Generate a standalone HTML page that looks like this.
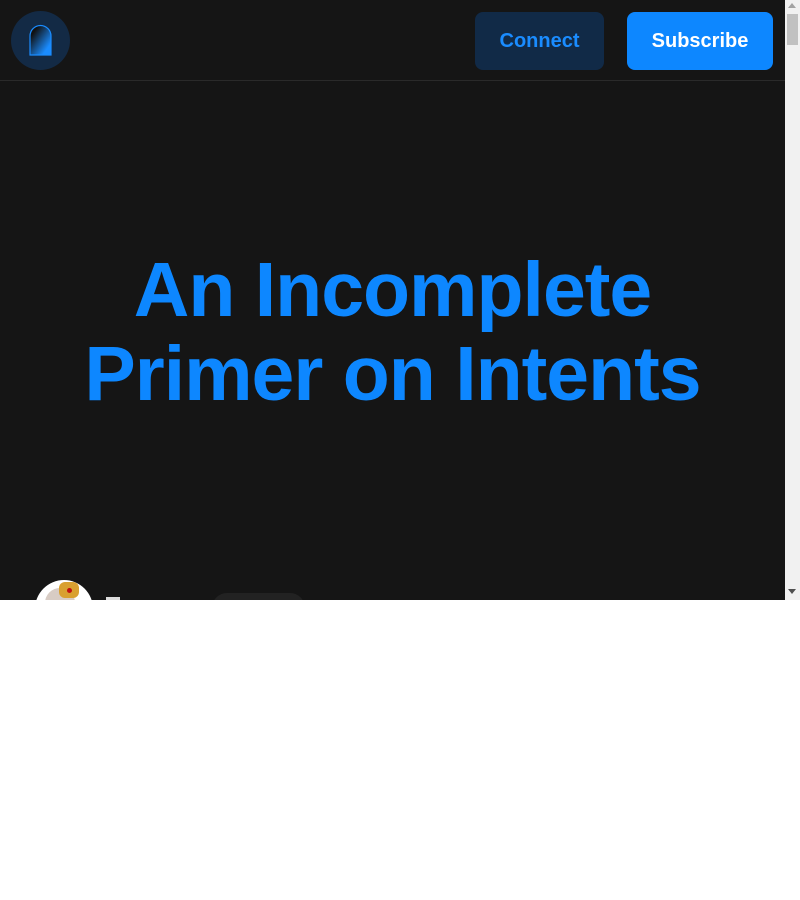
<!DOCTYPE html>
<html><head><style>
html,body{margin:0;padding:0;background:#fff;width:800px;height:900px;overflow:hidden;font-family:"Liberation Sans",sans-serif}
.main{position:absolute;left:0;top:0;width:785px;height:600px;background:#151515;overflow:hidden}
.hdr{position:absolute;left:0;top:0;width:785px;height:80px;border-bottom:1px solid #2a2a2a}
.logo{position:absolute;left:11px;top:11px;width:59px;height:59px;border-radius:50%;background:#132a45}
.btn{position:absolute;top:12px;height:58px;border-radius:8px;font-size:20px;line-height:58px;text-align:center;font-weight:bold}
.c{left:475px;width:129px;background:#112a47;color:#1a8cff}
.s{left:627px;width:146px;background:#0d87ff;color:#fff}
h1{position:absolute;left:0;top:248px;width:785px;margin:0;text-align:center;color:#0d87ff;font-size:77px;line-height:84px;font-weight:bold;letter-spacing:-1px}
.av{position:absolute;left:35px;top:580px;width:58px;height:58px;border-radius:50%;background:#fff;overflow:hidden}
.pill{position:absolute;left:212px;top:593px;width:93px;height:30px;border-radius:15px;background:#222}
.sb{position:absolute;left:785px;top:0;width:15px;height:600px;background:#f1f1f1}
.th{position:absolute;left:787px;top:14px;width:11px;height:31px;background:#c1c1c1}
</style></head><body>
<div class="main">
<div class="hdr">
<div class="logo"><svg width="59" height="59" viewBox="0 0 59 59"><defs><linearGradient id="g" x1="0" y1="0" x2="1" y2="1"><stop offset="0.2" stop-color="#111"/><stop offset="0.8" stop-color="#1a8cff"/></linearGradient></defs><path d="M19 44V25a10.5 10.5 0 0 1 21 0V44Z" fill="url(#g)" stroke="#1a8cff" stroke-width="1.2"/></svg></div>
<div class="btn c">Connect</div>
<div class="btn s">Subscribe</div>
</div>
<h1>An Incomplete<br>Primer on Intents</h1>
<div class="av"><div style="position:absolute;left:10px;top:8px;width:30px;height:30px;border-radius:50%;background:#d8ccc4"></div><div style="position:absolute;left:24px;top:2px;width:20px;height:16px;background:#d9a030;border-radius:6px"></div><div style="position:absolute;left:32px;top:8px;width:5px;height:5px;background:#c01010;border-radius:50%"></div></div>
<div style="position:absolute;left:106px;top:597px;width:14px;height:3px;background:#ddd"></div>
<div class="pill"></div>
</div>
<div class="sb"></div><div class="th"></div>
<div style="position:absolute;left:788px;top:3px;width:0;height:0;border-left:4px solid transparent;border-right:4px solid transparent;border-bottom:5px solid #a3a3a3"></div>
<div style="position:absolute;left:788px;top:589px;width:0;height:0;border-left:4px solid transparent;border-right:4px solid transparent;border-top:5px solid #505050"></div>
</body></html>
